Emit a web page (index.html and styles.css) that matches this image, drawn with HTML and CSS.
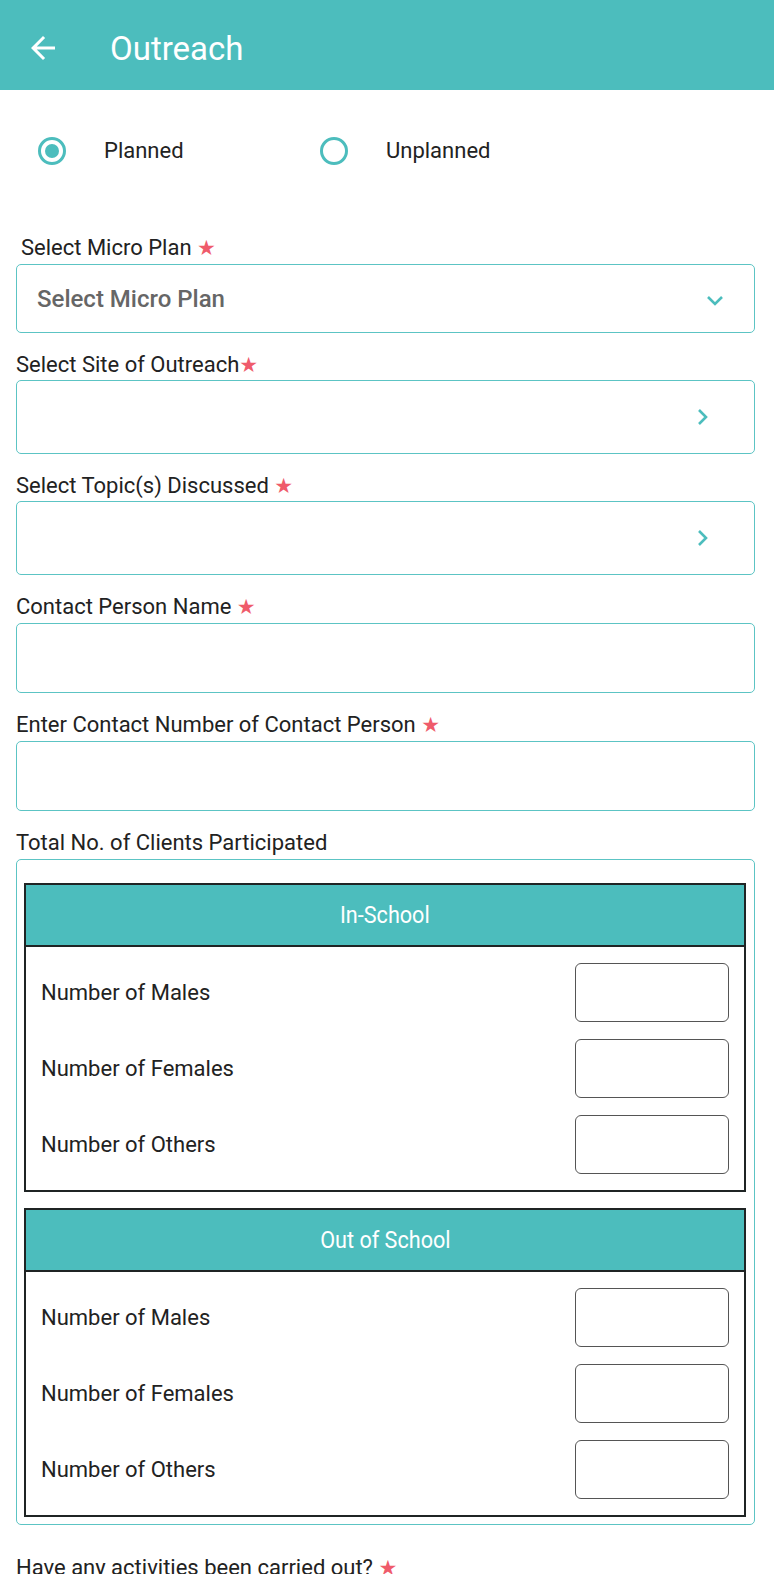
FILE: index.html
```html
<!DOCTYPE html>
<html>
<head>
<meta charset="utf-8">
<link rel="stylesheet" href="styles.css">
</head>
<body>
<header class="appbar">
  <svg class="back" viewBox="0 0 24 24" width="36" height="36"><path d="M20 11H7.83l5.59-5.59L12 4l-8 8 8 8 1.41-1.41L7.83 13H20v-2z" fill="#fff"/></svg>
  <h1 class="title">Outreach</h1>
</header>

<div class="radios">
  <div class="radio">
    <span class="circle checked"><span class="dot"></span></span>
    <span class="rlabel">Planned</span>
  </div>
  <div class="radio second">
    <span class="circle"></span>
    <span class="rlabel">Unplanned</span>
  </div>
</div>

<main class="form">
  <label class="lbl first">Select Micro Plan <span class="star">★</span></label>
  <div class="box select h69">
    <span class="placeholder">Select Micro Plan</span>
    <svg class="chev-down" viewBox="0 0 18 12" width="18" height="12"><path d="M2 2l7 7 7-7" fill="none" stroke="#4cbdbd" stroke-width="2.6"/></svg>
  </div>

  <label class="lbl tight">Select Site of Outreach<span class="star">★</span></label>
  <div class="box select h74">
    <span></span>
    <svg class="chev-right" viewBox="0 0 12 18" width="12" height="18"><path d="M2 2l7 7-7 7" fill="none" stroke="#4cbdbd" stroke-width="2.6"/></svg>
  </div>

  <label class="lbl tight">Select Topic(s) Discussed <span class="star">★</span></label>
  <div class="box select h74">
    <span></span>
    <svg class="chev-right" viewBox="0 0 12 18" width="12" height="18"><path d="M2 2l7 7-7 7" fill="none" stroke="#4cbdbd" stroke-width="2.6"/></svg>
  </div>

  <label class="lbl">Contact Person Name <span class="star">★</span></label>
  <div class="box h70"></div>

  <label class="lbl">Enter Contact Number of Contact Person <span class="star">★</span></label>
  <div class="box h70"></div>

  <label class="lbl">Total No. of Clients Participated</label>
  <div class="clients">
    <section class="tbl">
      <div class="thead"><span class="cond">In-School</span></div>
      <div class="tbody">
        <div class="row"><span>Number of Males</span><span class="num"></span></div>
        <div class="row"><span>Number of Females</span><span class="num"></span></div>
        <div class="row"><span>Number of Others</span><span class="num"></span></div>
      </div>
    </section>
    <section class="tbl">
      <div class="thead"><span class="cond">Out of School</span></div>
      <div class="tbody">
        <div class="row"><span>Number of Males</span><span class="num"></span></div>
        <div class="row"><span>Number of Females</span><span class="num"></span></div>
        <div class="row"><span>Number of Others</span><span class="num"></span></div>
      </div>
    </section>
  </div>

  <label class="lbl last">Have any activities been carried out? <span class="star">★</span></label>
</main>
</body>
</html>
```

FILE: styles.css
```css
* { box-sizing: border-box; }
html, body { margin: 0; padding: 0; background: #fff; }
body {
  font-family: Roboto, "Noto Sans", sans-serif;
  color: #222;
  height: 1574px;
  overflow: hidden;
}

.appbar {
  height: 90px;
  background: #4cbdbd;
  display: flex;
  align-items: center;
  padding: 6px 0 0 25px;
}
.back { display: block; }
.title {
  margin: 0 0 0 49px;
  font-size: 33px;
  font-weight: 400;
  color: #fff;
  line-height: 1;
}

.radios {
  display: flex;
  align-items: center;
  height: 121px;
  padding-left: 38px;
}
.radio { display: flex; align-items: center; width: 282px; }
.circle {
  width: 28px; height: 28px;
  border: 3px solid #4cbdbd;
  border-radius: 50%;
  display: flex; align-items: center; justify-content: center;
}
.dot { width: 14px; height: 14px; border-radius: 50%; background: #4cbdbd; }
.rlabel { margin-left: 38px; font-size: 22px; color: #222; }

.form {
  padding: 0 19px 0 16px;
  display: flex;
  flex-direction: column;
}
.lbl {
  font-size: 22px;
  line-height: 24px;
  height: 24px;
  margin: 20px 0 4px;
  color: #222;
  white-space: nowrap;
}
.lbl.tight { margin-bottom: 3px; }
.lbl.first { margin: 25px 0 4px 5px; }
.lbl.last { margin-top: 31px; }
.star {
  color: #ef5b6b;
  font-size: 21px;
  line-height: 0;
  font-family: "DejaVu Sans", sans-serif;
}

.box {
  border: 1.5px solid #5cc4c4;
  border-radius: 5px;
}
.h69 { height: 69px; }
.h74 { height: 74px; }
.h70 { height: 70px; }
.select {
  display: flex;
  align-items: center;
  justify-content: space-between;
  padding: 0 30px 0 20px;
}
.select.h74 { padding-right: 45px; }
.placeholder { font-size: 24px; font-weight: 500; color: #666; }
.chev-down { margin-top: 4px; }

.clients {
  border: 1.5px solid #5cc4c4;
  border-radius: 5px;
  height: 666px;
  padding: 23px 8px 0 7px;
  display: flex;
  flex-direction: column;
  gap: 16px;
}
.tbl { border: 2px solid #1f2424; }
.thead {
  height: 62px;
  background: #4cbdbd;
  border-bottom: 2px solid #1f2424;
  display: flex;
  align-items: center;
  justify-content: center;
  color: #fff;
}
.cond {
  display: inline-block;
  font-size: 24px;
  transform: scaleX(0.9);
}
.tbody {
  padding: 16px 15px 16px 15px;
  display: flex;
  flex-direction: column;
  gap: 17px;
}
.row {
  display: flex;
  align-items: center;
  justify-content: space-between;
  font-size: 22px;
  color: #222;
}
.num {
  width: 154px;
  height: 59px;
  border: 1.5px solid #555;
  border-radius: 6px;
}
```
